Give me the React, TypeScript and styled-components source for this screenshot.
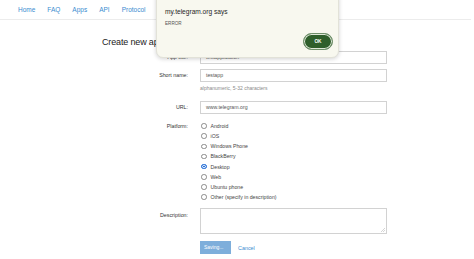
import React from 'react'
import styled, { createGlobalStyle } from 'styled-components'

const GlobalStyle = createGlobalStyle`
  html, body {
    margin: 0;
    padding: 0;
    background: #ffffff;
    font-family: "Liberation Sans", Arial, sans-serif;
    overflow: hidden;
  }
`

const Page = styled.div`
  position: relative;
  width: 474px;
  height: 259px;
  overflow: hidden;
`

const NavBar = styled.nav`
  display: flex;
  gap: 12px;
  align-items: center;
  height: 19px;
  padding-left: 18px;
  margin-right: 3px;
  border-bottom: 1px solid #ececec;
`

const NavLink = styled.a`
  font-size: 6.5px;
  color: #3a8cd0;
  text-decoration: none;
`

const Heading = styled.h1`
  margin: 16px 0 3px 102px;
  font-size: 9px;
  letter-spacing: -0.15px;
  line-height: 12px;
  font-weight: normal;
  color: #222;
`

const Form = styled.div`
  display: flex;
  flex-direction: column;
`

const Row = styled.div<{ $gap?: number }>`
  display: grid;
  grid-template-columns: 188px 187px;
  column-gap: 12px;
  margin-bottom: ${p => p.$gap ?? 0}px;
`

const Label = styled.div<{ $top?: number; $line?: number }>`
  text-align: right;
  font-size: 5.3px;
  color: #333;
  line-height: ${p => p.$line ?? 13}px;
  padding-top: ${p => p.$top ?? 0}px;
`

const Field = styled.div`
  display: flex;
  flex-direction: column;
`

const Input = styled.div`
  box-sizing: border-box;
  height: 13px;
  border: 1px solid #d2d2d2;
  padding-left: 5px;
  font-size: 5.2px;
  line-height: 11px;
  color: #555;
  background: #fff;
`

const TextArea = styled.div`
  position: relative;
  box-sizing: border-box;
  height: 26px;
  border: 1px solid #d2d2d2;
  background: #fff;
`

const Grip = styled.svg`
  position: absolute;
  right: 1px;
  bottom: 1px;
`

const Hint = styled.div`
  margin-top: 3px;
  font-size: 5px;
  line-height: 6px;
  color: #8a8a8a;
`

const RadioList = styled.div`
  display: flex;
  flex-direction: column;
`

const RadioRow = styled.div`
  display: flex;
  align-items: center;
  gap: 4px;
  height: 10.15px;
  padding-left: 1px;
  font-size: 5.2px;
  color: #444;
`

const Radio = styled.span<{ $on?: boolean }>`
  box-sizing: border-box;
  width: 5.5px;
  height: 5.5px;
  border-radius: 50%;
  border: ${p => (p.$on ? '1.4px solid #2a72d8' : '0.7px solid #8a8a8a')};
  background: ${p => (p.$on ? '#2a72d8' : '#fff')};
  box-shadow: ${p => (p.$on ? 'inset 0 0 0 0.8px #fff' : 'none')};
`

const Actions = styled.div`
  display: flex;
  align-items: center;
  gap: 7px;
  margin-left: 200px;
`

const SaveButton = styled.div`
  width: 31px;
  height: 13px;
  background: #7eaedb;
  color: #fff;
  font-size: 5px;
  line-height: 13px;
  padding-left: 4px;
  box-sizing: border-box;
`

const CancelLink = styled.a`
  font-size: 5.4px;
  color: #3a8cd0;
`

const Dialog = styled.div`
  position: absolute;
  left: 156px;
  top: -10px;
  width: 183px;
  height: 68px;
  box-sizing: border-box;
  background: #f8f8ef;
  border: 1px solid #e2e2d8;
  border-radius: 7px;
  box-shadow: 0 1px 4px rgba(0, 0, 0, 0.18);
  padding: 17px 0 0 8px;
`

const DialogTitle = styled.div`
  font-size: 6.6px;
  line-height: 8px;
  color: #1f1f1f;
`

const DialogText = styled.div`
  margin-top: 5px;
  font-size: 4.6px;
  color: #555;
`

const OkButton = styled.div`
  position: absolute;
  right: 5px;
  bottom: 7px;
  width: 30px;
  height: 17px;
  box-sizing: border-box;
  border-radius: 9px;
  background: #2f5f2b;
  border: 1px solid #6f8f6a;
  box-shadow: inset 0 0 0 1px #dfe8d8;
  color: #fff;
  font-size: 4.8px;
  font-weight: bold;
  display: flex;
  align-items: center;
  justify-content: center;
`

const platforms = [
  'Android',
  'iOS',
  'Windows Phone',
  'BlackBerry',
  'Desktop',
  'Web',
  'Ubuntu phone',
  'Other (specify in description)',
]

export default function App() {
  return (
    <Page>
      <GlobalStyle />
      <NavBar>
        <NavLink>Home</NavLink>
        <NavLink>FAQ</NavLink>
        <NavLink>Apps</NavLink>
        <NavLink>API</NavLink>
        <NavLink>Protocol</NavLink>
      </NavBar>
      <Heading>Create new application</Heading>
      <Form>
        <Row $gap={5}>
          <Label>App title:</Label>
          <Input>testapplication</Input>
        </Row>
        <Row $gap={10}>
          <Label>Short name:</Label>
          <Field>
            <Input>testapp</Input>
            <Hint>alphanumeric, 5-32 characters</Hint>
          </Field>
        </Row>
        <Row $gap={7}>
          <Label>URL:</Label>
          <Input>www.telegram.org</Input>
        </Row>
        <Row $gap={6}>
          <Label $line={10.15}>Platform:</Label>
          <RadioList>
            {platforms.map(p => (
              <RadioRow key={p}>
                <Radio $on={p === 'Desktop'} />
                {p}
              </RadioRow>
            ))}
          </RadioList>
        </Row>
        <Row $gap={7}>
          <Label $top={1}>Description:</Label>
          <TextArea>
            <Grip width="4" height="4" viewBox="0 0 4 4">
              <path d="M4 0 L0 4 M4 2 L2 4" stroke="#aaa" strokeWidth="0.5" />
            </Grip>
          </TextArea>
        </Row>
        <Actions>
          <SaveButton>Saving...</SaveButton>
          <CancelLink>Cancel</CancelLink>
        </Actions>
      </Form>
      <Dialog>
        <DialogTitle>my.telegram.org says</DialogTitle>
        <DialogText>ERROR</DialogText>
        <OkButton>OK</OkButton>
      </Dialog>
    </Page>
  )
}
